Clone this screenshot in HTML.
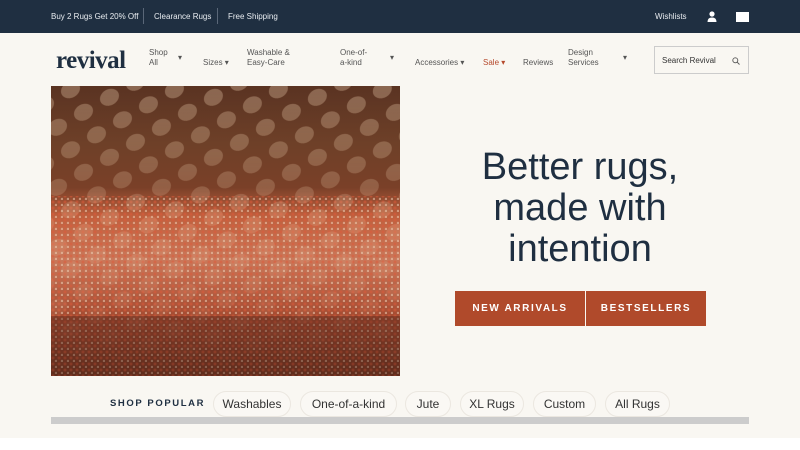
<!DOCTYPE html>
<html><head><style>
*{margin:0;padding:0;box-sizing:border-box}
body{width:800px;height:450px;background:#fff;font-family:"Liberation Sans",sans-serif;position:relative;overflow:hidden}
.top{position:absolute;left:0;top:0;width:800px;height:33px;background:#1f2f41;color:#e8ecf0;font-size:8px}
.top span{position:absolute;top:12px}
.sep{position:absolute;top:8px;width:1px;height:16px;background:#5a6778}
.main{position:absolute;left:0;top:33px;width:800px;height:405px;background:#f9f7f2}
.nav{position:absolute;font-size:8px;color:#555;line-height:10px}
.logo{position:absolute;left:56px;top:47px;font-family:"Liberation Serif",serif;font-weight:bold;font-size:25px;color:#1f2f41;letter-spacing:-0.5px}
.search{position:absolute;left:654px;top:46px;width:95px;height:28px;border:1px solid #ccc;font-size:8px;color:#333;padding:9px 0 0 7px}
.img{position:absolute;left:51px;top:86px;width:349px;height:290px;overflow:hidden;
background:linear-gradient(180deg,#5a3322 0%,#6e4028 20%,#7a4028 35%,#c0603e 45%,#c9785a 60%,#a44a30 80%,#6e3320 100%)}
h1{position:absolute;left:430px;width:300px;top:147px;text-align:center;font-weight:normal;font-size:38px;line-height:41px;color:#1f2f41}
.btn{position:absolute;top:291px;height:35px;background:#b04a2b;color:#fff;font-size:10px;letter-spacing:1.6px;text-align:center;line-height:35px;font-weight:bold}
.pill{position:absolute;top:391px;height:26px;border:1px solid #ebe7e0;border-radius:13px;font-size:12px;color:#333;line-height:25px;text-align:center;background:#faf8f4}
</style></head><body>
<div class="top">
<span style="left:51px">Buy 2 Rugs Get 20% Off</span><div class="sep" style="left:143px"></div>
<span style="left:154px">Clearance Rugs</span><div class="sep" style="left:217px"></div>
<span style="left:228px">Free Shipping</span>
<span style="left:655px">Wishlists</span>
<svg style="position:absolute;left:707px;top:11px" width="10" height="11" viewBox="0 0 10 11"><circle cx="5" cy="3" r="2.6" fill="#fff"/><path d="M0.5 11 Q0.5 6.5 5 6.5 Q9.5 6.5 9.5 11Z" fill="#fff"/></svg>
<div style="position:absolute;left:736px;top:12px;width:13px;height:10px;background:#fff"></div>
</div>
<div class="main"></div>
<div class="logo">revival</div>
<div class="nav" style="left:149px;top:48px">Shop<br>All</div><div class="nav" style="left:178px;top:53px">▾</div>
<div class="nav" style="left:203px;top:58px">Sizes ▾</div>
<div class="nav" style="left:247px;top:48px">Washable &amp;<br>Easy-Care</div>
<div class="nav" style="left:340px;top:48px">One-of-<br>a-kind</div><div class="nav" style="left:390px;top:53px">▾</div>
<div class="nav" style="left:415px;top:58px">Accessories ▾</div>
<div class="nav" style="left:483px;top:58px;color:#b5492c">Sale ▾</div>
<div class="nav" style="left:523px;top:58px">Reviews</div>
<div class="nav" style="left:568px;top:48px">Design<br>Services</div><div class="nav" style="left:623px;top:53px">▾</div>
<div class="search">Search Revival<svg style="position:absolute;left:77px;top:10px" width="8" height="8" viewBox="0 0 8 8"><circle cx="3.3" cy="3.3" r="2.5" fill="none" stroke="#555" stroke-width="0.9"/><path d="M5.2 5.2L7.5 7.5" stroke="#555" stroke-width="0.9"/></svg></div>
<div class="img">
<svg width="349" height="290" style="position:absolute;left:0;top:0">
<defs><pattern id="p" width="30" height="26" patternUnits="userSpaceOnUse" patternTransform="rotate(-30)"><ellipse cx="15" cy="13" rx="10" ry="8" fill="#e8c9a8" opacity="0.35"/></pattern>
<pattern id="q" width="6" height="6" patternUnits="userSpaceOnUse"><circle cx="2" cy="2" r="1.5" fill="#e05a3a" opacity="0.5"/><circle cx="5" cy="5" r="1.2" fill="#f3dcc4" opacity="0.5"/></pattern>
<linearGradient id="f" x1="0" y1="0" x2="0" y2="1"><stop offset="0" stop-color="#fff" stop-opacity="1"/><stop offset="0.5" stop-color="#fff" stop-opacity="0.5"/><stop offset="1" stop-color="#fff" stop-opacity="0"/></linearGradient>
<mask id="m"><rect width="349" height="290" fill="url(#f)"/></mask></defs>
<rect x="0" y="110" width="349" height="180" fill="url(#q)"/>
<rect width="349" height="290" fill="url(#p)" mask="url(#m)"/>
<rect x="0" y="230" width="349" height="60" fill="#4a2418" opacity="0.4"/>
</svg></div>
<h1>Better rugs,<br>made with<br>intention</h1>
<div class="btn" style="left:455px;width:130px">NEW ARRIVALS</div>
<div class="btn" style="left:586px;width:120px">BESTSELLERS</div>
<div style="position:absolute;left:110px;top:398px;font-size:9.5px;font-weight:bold;letter-spacing:1.6px;color:#1f2f41">SHOP POPULAR</div>
<div class="pill" style="left:213px;width:78px">Washables</div>
<div class="pill" style="left:300px;width:97px">One-of-a-kind</div>
<div class="pill" style="left:405px;width:46px">Jute</div>
<div class="pill" style="left:460px;width:64px">XL Rugs</div>
<div class="pill" style="left:533px;width:63px">Custom</div>
<div class="pill" style="left:605px;width:65px">All Rugs</div>
<div style="position:absolute;left:51px;top:417px;width:698px;height:7px;background:#cccccc"></div>
</body></html>
